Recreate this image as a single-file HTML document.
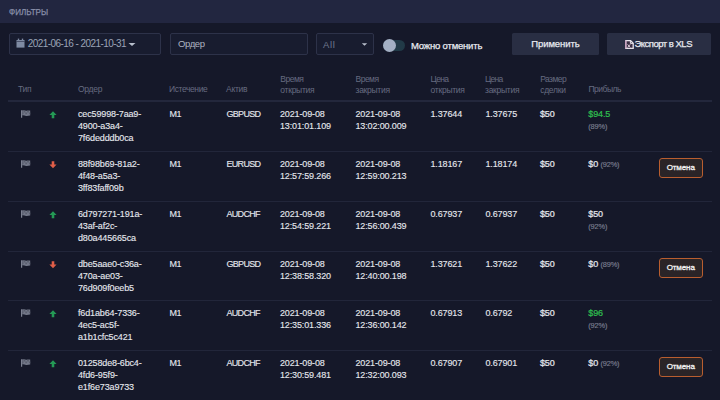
<!DOCTYPE html>
<html><head><meta charset="utf-8">
<style>
*{margin:0;padding:0;box-sizing:border-box}
html,body{width:720px;height:400px;overflow:hidden;background:#151829;font-family:"Liberation Sans",sans-serif}
.a{position:absolute;white-space:nowrap;z-index:2}
.sb{-webkit-text-stroke:0.25px currentColor}
#hdr{position:absolute;left:0;top:0;width:720px;height:23px;background:#222640}
.box{position:absolute;top:33px;height:22px;border:1px solid #2d3249;border-radius:2px;background:#181c2f}
.btn{position:absolute;top:33px;height:22px;background:#292e43;border-radius:1.5px}
.th{position:absolute;color:#666b80;font-size:8.5px;line-height:10.5px;white-space:nowrap;letter-spacing:-0.27px}
.td{position:absolute;color:#e6e8ee;font-size:9.0px;line-height:12.0px;white-space:nowrap;letter-spacing:-0.14px}
.cap{letter-spacing:-0.7px}
.sep{position:absolute;left:8px;width:704px;height:1px;background:#22263a}
.cancel{position:absolute;left:658.7px;width:44px;height:20.5px;border:1.8px solid #b95e2f;border-radius:3px;background:#2a2427;color:#f2f2f2;font-size:8px;-webkit-text-stroke:0.3px #f2f2f2;text-align:center;line-height:17.4px;white-space:nowrap;letter-spacing:-0.1px}
.td{-webkit-text-stroke:0.12px currentColor}
.g{color:#2fbf4f}
.bb{-webkit-text-stroke:0.22px currentColor}
.pc{color:#7a7e8f;font-size:7.4px;letter-spacing:-0.15px;-webkit-text-stroke:0.15px currentColor}
</style></head><body>

<div id="hdr"></div>
<div class="a sb" style="left:8.8px;top:6.2px;font-size:9.6px;color:#8a90aa;transform:scaleX(0.84);transform-origin:0 0">ФИЛЬТРЫ</div>

<div class="box" style="left:9px;width:152px"></div>
<div class="box" style="left:170px;width:138px"></div>
<div class="box" style="left:316px;width:58px"></div>
<div class="a" style="left:27.8px;top:38.3px;font-size:10px;color:#9aa3b6;letter-spacing:-0.56px">2021-06-16 - 2021-10-31</div>
<div class="a" style="left:178px;top:38px;font-size:9.5px;color:#aeb3c0;letter-spacing:-0.4px">Ордер</div>
<div class="a" style="left:323px;top:38.5px;font-size:9.5px;color:#6f7a90;letter-spacing:0.7px">All</div>


<svg class="a" style="left:15.6px;top:38.2px" width="9" height="10" viewBox="0 0 9 10"><rect x="0.5" y="2" width="8" height="7.6" fill="#7f8ba3"/><rect x="1.8" y="0.6" width="1.4" height="2" fill="#7f8ba3"/><rect x="5.8" y="0.6" width="1.4" height="2" fill="#7f8ba3"/><rect x="0.5" y="3.2" width="8" height="0.6" fill="#2a3048"/></svg>
<svg class="a" style="left:128px;top:42.5px" width="8" height="3" viewBox="0 0 8 3"><path d="M0.5 0L7.5 0L4 3Z" fill="#b8bfcc"/></svg>
<svg class="a" style="left:361px;top:42.5px" width="7" height="3" viewBox="0 0 7 3"><path d="M0.8 0.3L6.2 0.3L3.5 2.8Z" fill="#b8bfcc"/></svg>
<div class="a" style="left:383px;top:40px;width:22px;height:11px;border-radius:6px;background:#213a47"></div>
<div class="a" style="left:383px;top:39px;width:13px;height:13px;border-radius:50%;background:#a3b0c4"></div>
<svg class="a" style="left:625px;top:40px" width="9" height="9" viewBox="0 0 9 9"><path d="M0.8 0.6H5.6L8.2 3.2V8.4H0.8Z" fill="#3a2f44" stroke="#e6e2ea" stroke-width="1.3"/><path d="M5.4 0.6V3.4H8.2" fill="none" stroke="#e6e2ea" stroke-width="1"/><path d="M2.6 4.4L5.2 7.4M5.2 4.4L2.6 7.4" stroke="#d8c6d6" stroke-width="1"/><path d="M0.8 0.6V8.4" stroke="#c79bbd" stroke-width="1.3"/></svg>
<div class="a sb" style="left:411px;top:40px;font-size:9.5px;color:#e8eaf0;letter-spacing:-0.19px">Можно отменить</div>

<div class="btn" style="left:512px;width:86.5px"></div>
<div class="btn" style="left:607px;width:104px"></div>
<div class="a sb" style="left:531.3px;top:38.2px;font-size:9.5px;color:#e8eaf0;letter-spacing:-0.1px">Применить</div>
<div class="a sb" style="left:634.5px;top:38.4px;font-size:9.5px;color:#e8eaf0;letter-spacing:-0.5px">Экспорт в XLS</div>

<div class="th" style="left:18px;top:84px">Тип</div>
<div class="th" style="left:78px;top:84px">Ордер</div>
<div class="th" style="left:169px;top:84px;letter-spacing:-0.4px">Истечение</div>
<div class="th" style="left:226px;top:84px">Актив</div>
<div class="th" style="left:280.3px;top:74px"><span style="letter-spacing:-0.5px">Время</span><br>открытия</div>
<div class="th" style="left:355.5px;top:74px"><span style="letter-spacing:-0.5px">Время</span><br>закрытия</div>
<div class="th" style="left:430.6px;top:74px"><span style="letter-spacing:-0.7px">Цена</span><br>открытия</div>
<div class="th" style="left:485px;top:74px"><span style="letter-spacing:-0.7px">Цена</span><br>закрытия</div>
<div class="th" style="left:540.2px;top:74px"><span style="letter-spacing:-0.55px">Размер</span><br>сделки</div>
<div class="th" style="left:588.5px;top:84px;letter-spacing:-0.5px">Прибыль</div>
<div class="sep" style="top:100px;height:2px;background:#23273c"></div>

<div class="a" style="left:20.5px;top:110.30px;line-height:0"><svg width="10" height="8" viewBox="0 0 10 8"><path d="M0.6 0.2V7.8" stroke="#7d8292" stroke-width="1.2"/><path d="M1.2 0.5C2.6 0 3.8 1.0 5.6 0.8C7 0.6 8 0.3 9.2 0.4V5.4C8 5.3 7 5.8 5.6 5.9C3.8 6.1 2.6 5.0 1.2 5.5Z" fill="#737889"/><path d="M2.5 0.6H4.3V2.4H2.5ZM6.1 0.6H7.9V2.4H6.1ZM4.3 2.4H6.1V4.2H4.3ZM7.9 2.4H9.2V4.2H7.9ZM1.2 2.4H2.5V4.2H1.2Z" fill="#5a5e6e"/></svg></div>
<div class="a" style="left:49.3px;top:111.00px;line-height:0"><svg width="8" height="8" viewBox="0 0 8 8"><path d="M4 0.2L7.6 3.9H5.3V7.2H2.7V3.9H0.4Z" fill="#249a55"/></svg></div>
<div class="td" style="left:78px;top:107.80px">cec59998-7aa9-<br>4900-a3a4-<br>7f6dedddb0ca</div>
<div class="td" style="left:169.5px;top:107.80px;letter-spacing:-0.6px">M1</div>
<div class="td cap" style="left:226.5px;top:107.80px">GBPUSD</div>
<div class="td" style="left:280px;top:107.80px">2021-09-08<br>13:01:01.109</div>
<div class="td" style="left:355.5px;top:107.80px">2021-09-08<br>13:02:00.009</div>
<div class="td" style="left:430.5px;top:107.80px">1.37644</div>
<div class="td" style="left:485.5px;top:107.80px">1.37675</div>
<div class="td bb" style="left:540px;top:107.80px">$50</div>
<div class="td g" style="left:588.3px;top:107.80px"><span class="bb">$94.5</span><br><span class="pc">(89%)</span></div>
<div class="sep" style="top:151.00px"></div>
<div class="a" style="left:20.5px;top:160.30px;line-height:0"><svg width="10" height="8" viewBox="0 0 10 8"><path d="M0.6 0.2V7.8" stroke="#7d8292" stroke-width="1.2"/><path d="M1.2 0.5C2.6 0 3.8 1.0 5.6 0.8C7 0.6 8 0.3 9.2 0.4V5.4C8 5.3 7 5.8 5.6 5.9C3.8 6.1 2.6 5.0 1.2 5.5Z" fill="#737889"/><path d="M2.5 0.6H4.3V2.4H2.5ZM6.1 0.6H7.9V2.4H6.1ZM4.3 2.4H6.1V4.2H4.3ZM7.9 2.4H9.2V4.2H7.9ZM1.2 2.4H2.5V4.2H1.2Z" fill="#5a5e6e"/></svg></div>
<div class="a" style="left:49.3px;top:161.00px;line-height:0"><svg width="8" height="8" viewBox="0 0 8 8"><path d="M4 7.2L7.6 3.5H5.3V0.2H2.7V3.5H0.4Z" fill="#e05e48"/></svg></div>
<div class="td" style="left:78px;top:157.80px">88f98b69-81a2-<br>4f48-a5a3-<br>3ff83faff09b</div>
<div class="td" style="left:169.5px;top:157.80px;letter-spacing:-0.6px">M1</div>
<div class="td cap" style="left:226.5px;top:157.80px">EURUSD</div>
<div class="td" style="left:280px;top:157.80px">2021-09-08<br>12:57:59.266</div>
<div class="td" style="left:355.5px;top:157.80px">2021-09-08<br>12:59:00.213</div>
<div class="td" style="left:430.5px;top:157.80px">1.18167</div>
<div class="td" style="left:485.5px;top:157.80px">1.18174</div>
<div class="td bb" style="left:540px;top:157.80px">$50</div>
<div class="td" style="left:588.3px;top:157.80px"><span class="bb">$0</span> <span class="pc">(92%)</span></div>
<div class="cancel" style="top:157.50px">Отмена</div>
<div class="sep" style="top:201.00px"></div>
<div class="a" style="left:20.5px;top:210.30px;line-height:0"><svg width="10" height="8" viewBox="0 0 10 8"><path d="M0.6 0.2V7.8" stroke="#7d8292" stroke-width="1.2"/><path d="M1.2 0.5C2.6 0 3.8 1.0 5.6 0.8C7 0.6 8 0.3 9.2 0.4V5.4C8 5.3 7 5.8 5.6 5.9C3.8 6.1 2.6 5.0 1.2 5.5Z" fill="#737889"/><path d="M2.5 0.6H4.3V2.4H2.5ZM6.1 0.6H7.9V2.4H6.1ZM4.3 2.4H6.1V4.2H4.3ZM7.9 2.4H9.2V4.2H7.9ZM1.2 2.4H2.5V4.2H1.2Z" fill="#5a5e6e"/></svg></div>
<div class="a" style="left:49.3px;top:211.00px;line-height:0"><svg width="8" height="8" viewBox="0 0 8 8"><path d="M4 0.2L7.6 3.9H5.3V7.2H2.7V3.9H0.4Z" fill="#249a55"/></svg></div>
<div class="td" style="left:78px;top:207.80px">6d797271-191a-<br>43af-af2c-<br>d80a445665ca</div>
<div class="td" style="left:169.5px;top:207.80px;letter-spacing:-0.6px">M1</div>
<div class="td cap" style="left:226.5px;top:207.80px">AUDCHF</div>
<div class="td" style="left:280px;top:207.80px">2021-09-08<br>12:54:59.221</div>
<div class="td" style="left:355.5px;top:207.80px">2021-09-08<br>12:56:00.439</div>
<div class="td" style="left:430.5px;top:207.80px">0.67937</div>
<div class="td" style="left:485.5px;top:207.80px">0.67937</div>
<div class="td bb" style="left:540px;top:207.80px">$50</div>
<div class="td" style="left:588.3px;top:207.80px"><span class="bb">$50</span><br><span class="pc">(92%)</span></div>
<div class="sep" style="top:251.00px"></div>
<div class="a" style="left:20.5px;top:260.30px;line-height:0"><svg width="10" height="8" viewBox="0 0 10 8"><path d="M0.6 0.2V7.8" stroke="#7d8292" stroke-width="1.2"/><path d="M1.2 0.5C2.6 0 3.8 1.0 5.6 0.8C7 0.6 8 0.3 9.2 0.4V5.4C8 5.3 7 5.8 5.6 5.9C3.8 6.1 2.6 5.0 1.2 5.5Z" fill="#737889"/><path d="M2.5 0.6H4.3V2.4H2.5ZM6.1 0.6H7.9V2.4H6.1ZM4.3 2.4H6.1V4.2H4.3ZM7.9 2.4H9.2V4.2H7.9ZM1.2 2.4H2.5V4.2H1.2Z" fill="#5a5e6e"/></svg></div>
<div class="a" style="left:49.3px;top:261.00px;line-height:0"><svg width="8" height="8" viewBox="0 0 8 8"><path d="M4 7.2L7.6 3.5H5.3V0.2H2.7V3.5H0.4Z" fill="#e05e48"/></svg></div>
<div class="td" style="left:78px;top:257.80px">dbe5aae0-c36a-<br>470a-ae03-<br>76d909f0eeb5</div>
<div class="td" style="left:169.5px;top:257.80px;letter-spacing:-0.6px">M1</div>
<div class="td cap" style="left:226.5px;top:257.80px">GBPUSD</div>
<div class="td" style="left:280px;top:257.80px">2021-09-08<br>12:38:58.320</div>
<div class="td" style="left:355.5px;top:257.80px">2021-09-08<br>12:40:00.198</div>
<div class="td" style="left:430.5px;top:257.80px">1.37621</div>
<div class="td" style="left:485.5px;top:257.80px">1.37622</div>
<div class="td bb" style="left:540px;top:257.80px">$50</div>
<div class="td" style="left:588.3px;top:257.80px"><span class="bb">$0</span> <span class="pc">(89%)</span></div>
<div class="cancel" style="top:257.50px">Отмена</div>
<div class="sep" style="top:300.00px"></div>
<div class="a" style="left:20.5px;top:309.30px;line-height:0"><svg width="10" height="8" viewBox="0 0 10 8"><path d="M0.6 0.2V7.8" stroke="#7d8292" stroke-width="1.2"/><path d="M1.2 0.5C2.6 0 3.8 1.0 5.6 0.8C7 0.6 8 0.3 9.2 0.4V5.4C8 5.3 7 5.8 5.6 5.9C3.8 6.1 2.6 5.0 1.2 5.5Z" fill="#737889"/><path d="M2.5 0.6H4.3V2.4H2.5ZM6.1 0.6H7.9V2.4H6.1ZM4.3 2.4H6.1V4.2H4.3ZM7.9 2.4H9.2V4.2H7.9ZM1.2 2.4H2.5V4.2H1.2Z" fill="#5a5e6e"/></svg></div>
<div class="a" style="left:49.3px;top:310.00px;line-height:0"><svg width="8" height="8" viewBox="0 0 8 8"><path d="M4 0.2L7.6 3.9H5.3V7.2H2.7V3.9H0.4Z" fill="#249a55"/></svg></div>
<div class="td" style="left:78px;top:306.80px">f6d1ab64-7336-<br>4ec5-ac5f-<br>a1b1cfc5c421</div>
<div class="td" style="left:169.5px;top:306.80px;letter-spacing:-0.6px">M1</div>
<div class="td cap" style="left:226.5px;top:306.80px">AUDCHF</div>
<div class="td" style="left:280px;top:306.80px">2021-09-08<br>12:35:01.336</div>
<div class="td" style="left:355.5px;top:306.80px">2021-09-08<br>12:36:00.142</div>
<div class="td" style="left:430.5px;top:306.80px">0.67913</div>
<div class="td" style="left:485.5px;top:306.80px">0.6792</div>
<div class="td bb" style="left:540px;top:306.80px">$50</div>
<div class="td g" style="left:588.3px;top:306.80px"><span class="bb">$96</span><br><span class="pc">(92%)</span></div>
<div class="sep" style="top:350.00px"></div>
<div class="a" style="left:20.5px;top:359.30px;line-height:0"><svg width="10" height="8" viewBox="0 0 10 8"><path d="M0.6 0.2V7.8" stroke="#7d8292" stroke-width="1.2"/><path d="M1.2 0.5C2.6 0 3.8 1.0 5.6 0.8C7 0.6 8 0.3 9.2 0.4V5.4C8 5.3 7 5.8 5.6 5.9C3.8 6.1 2.6 5.0 1.2 5.5Z" fill="#737889"/><path d="M2.5 0.6H4.3V2.4H2.5ZM6.1 0.6H7.9V2.4H6.1ZM4.3 2.4H6.1V4.2H4.3ZM7.9 2.4H9.2V4.2H7.9ZM1.2 2.4H2.5V4.2H1.2Z" fill="#5a5e6e"/></svg></div>
<div class="a" style="left:49.3px;top:360.00px;line-height:0"><svg width="8" height="8" viewBox="0 0 8 8"><path d="M4 0.2L7.6 3.9H5.3V7.2H2.7V3.9H0.4Z" fill="#249a55"/></svg></div>
<div class="td" style="left:78px;top:356.80px">01258de8-6bc4-<br>4fd6-95f9-<br>e1f6e73a9733</div>
<div class="td" style="left:169.5px;top:356.80px;letter-spacing:-0.6px">M1</div>
<div class="td cap" style="left:226.5px;top:356.80px">AUDCHF</div>
<div class="td" style="left:280px;top:356.80px">2021-09-08<br>12:30:59.481</div>
<div class="td" style="left:355.5px;top:356.80px">2021-09-08<br>12:32:00.093</div>
<div class="td" style="left:430.5px;top:356.80px">0.67907</div>
<div class="td" style="left:485.5px;top:356.80px">0.67901</div>
<div class="td bb" style="left:540px;top:356.80px">$50</div>
<div class="td" style="left:588.3px;top:356.80px"><span class="bb">$0</span> <span class="pc">(92%)</span></div>
<div class="cancel" style="top:356.50px">Отмена</div>
</body></html>
